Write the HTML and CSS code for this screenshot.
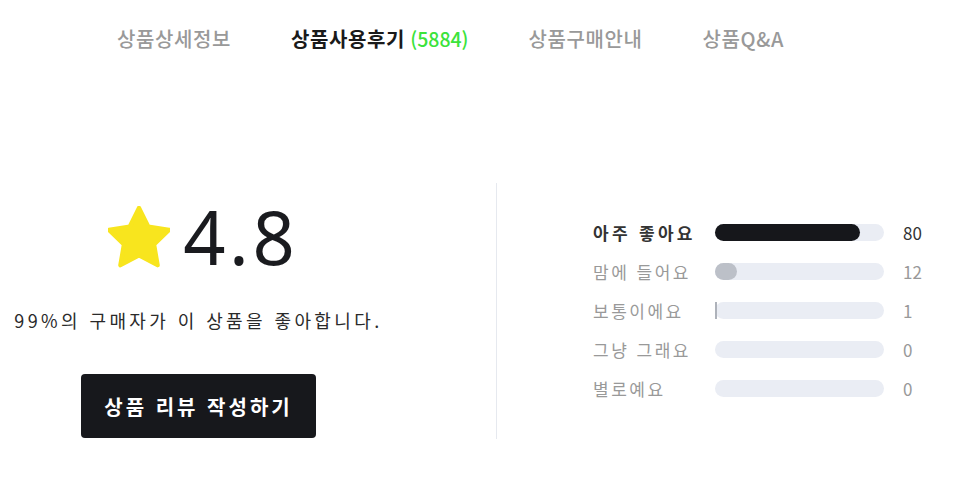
FILE: index.html
```html
<!DOCTYPE html>
<html lang="ko">
<head>
  <meta charset="UTF-8">
  <meta name="viewport" content="width=device-width, initial-scale=1.0">
  <title>상품사용후기</title>
  <link rel="stylesheet" href="styles.css">
</head>
<body>
  <nav class="tabs">
    <a class="tab">상품상세정보</a>
    <a class="tab active">상품사용후기 <span class="count">(5884)</span></a>
    <a class="tab">상품구매안내</a>
    <a class="tab">상품Q&amp;A</a>
  </nav>

  <section class="summary">
    <div class="score">
      <div class="rating">
        <svg class="star" viewBox="2 1.6 20 20" width="62" height="62">
          <path d="M12 2.2l3 6.1 6.7 1-4.85 4.7 1.15 6.7L12 17.5l-6 3.2 1.15-6.7L2.3 9.3l6.7-1z" fill="#f8e51e" stroke="#f8e51e" stroke-width="1.4" stroke-linejoin="round"/>
        </svg>
        <span class="average">4.8</span>
      </div>
      <p class="like">99%의 구매자가 이 상품을 좋아합니다.</p>
      <button class="write">상품 리뷰 작성하기</button>
    </div>

    <div class="divider"></div>

    <ul class="dist">
      <li class="row top">
        <span class="label">아주 좋아요</span>
        <span class="bar"><span class="fill" style="width: 86%"></span></span>
        <span class="num">80</span>
      </li>
      <li class="row">
        <span class="label">맘에 들어요</span>
        <span class="bar"><span class="fill" style="width: 13%"></span></span>
        <span class="num">12</span>
      </li>
      <li class="row">
        <span class="label">보통이에요</span>
        <span class="bar"><span class="fill thin"></span></span>
        <span class="num">1</span>
      </li>
      <li class="row">
        <span class="label">그냥 그래요</span>
        <span class="bar"></span>
        <span class="num">0</span>
      </li>
      <li class="row">
        <span class="label">별로예요</span>
        <span class="bar"></span>
        <span class="num">0</span>
      </li>
    </ul>
  </section>
</body>
</html>
```

FILE: styles.css
```css
* {
  margin: 0;
  padding: 0;
  box-sizing: border-box;
}

body {
  background: #fff;
  font-family: "Noto Sans CJK KR", "Noto Sans", sans-serif;
  color: #333;
  width: 966px;
  height: 482px;
  overflow: hidden;
}

.tabs {
  display: flex;
  gap: 60px;
  padding: 23px 0 0 117px;
  height: 60px;
}

.tab {
  font-size: 20px;
  line-height: 32px;
  font-weight: 500;
  letter-spacing: 0.6px;
  color: #999;
  white-space: nowrap;
}

.tab.active {
  color: #1a1a1a;
  font-weight: 700;
}

.tab .count {
  color: #3be33b;
  font-size: 19.5px;
  font-weight: 500;
  letter-spacing: 0;
  margin-left: -1px;
}

.summary {
  display: flex;
  margin-top: 123px;
  height: 256px;
}

.score {
  width: 397px;
  display: flex;
  flex-direction: column;
  align-items: center;
  padding-top: 22px;
}

.rating {
  display: flex;
  align-items: center;
  height: 64px;
  gap: 13px;
  margin-left: 6px;
}

.star {
  display: block;
}

.average {
  font-family: "Noto Sans", sans-serif;
  font-size: 74px;
  line-height: 64px;
  font-weight: 400;
  letter-spacing: 3.5px;
  margin-right: -3.5px;
  color: #1a1b1f;
}

.like {
  margin-top: 39px;
  font-size: 18px;
  line-height: 24px;
  letter-spacing: 3.4px;
  color: #2a2a2a;
}

.write {
  margin-top: 42px;
  width: 235px;
  height: 64px;
  background: #17181c;
  color: #fff;
  border: none;
  border-radius: 4px;
  font-family: inherit;
  font-size: 20px;
  font-weight: 700;
  letter-spacing: 3px;
}

.divider {
  width: 1px;
  margin-left: 99px;
  background: #e6e9ef;
}

.dist {
  list-style: none;
  padding: 0 0 2px 96px;
  display: flex;
  flex-direction: column;
  justify-content: center;
}

.row {
  display: flex;
  align-items: center;
  height: 39px;
}

.label {
  width: 122px;
  font-size: 17px;
  letter-spacing: 2.5px;
  color: #999;
}

.bar {
  width: 169px;
  height: 17px;
  border-radius: 9px;
  background: #eaedf4;
}

.fill {
  display: block;
  height: 100%;
  border-radius: 9px;
  background: #bcc0c8;
}

.fill.thin {
  border-radius: 0;
  width: 2px;
  background: #aeb2ba;
}

.num {
  margin-left: 19px;
  font-size: 17px;
  color: #999;
}

.row.top .label {
  color: #333;
  font-weight: 700;
  letter-spacing: 3.3px;
}

.row.top .fill {
  background: #16171b;
}

.row.top .num {
  color: #333;
}
```
